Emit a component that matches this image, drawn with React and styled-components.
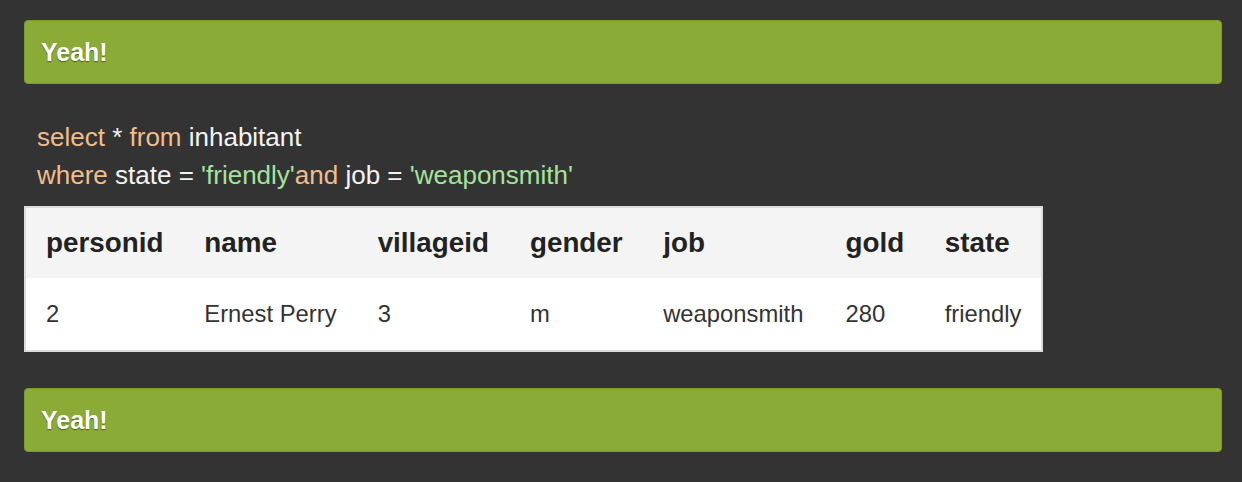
import React from "react";
import styled, { createGlobalStyle } from "styled-components";

const Global = createGlobalStyle`
  html, body { margin: 0; padding: 0; background: #333333; }
  body { font-family: "Liberation Sans", Arial, Helvetica, sans-serif; }
`;

const Page = styled.div`
  padding: 20px 20px 20px 24px;
  display: flex;
  flex-direction: column;
  align-items: flex-start;
`;

const Banner = styled.div`
  box-sizing: border-box;
  width: 100%;
  height: 64px;
  display: flex;
  align-items: center;
  padding: 0 16px;
  margin-top: ${(p) => p.$top || 0}px;
  background: #8aab35;
  border: 1px solid #7a9a2c;
  border-radius: 4px;
  color: #ffffff;
  font-size: 25px;
  font-weight: 700;
  text-shadow: 0 1px 1px rgba(0, 0, 0, 0.45);
`;

const Code = styled.div`
  margin-top: 34px;
  padding-left: 13px;
  font-size: 26px;
  line-height: 38px;
  color: #f4f4f4;
  white-space: pre;
`;

const Kw = styled.span`
  color: #f0be8c;
`;

const Str = styled.span`
  color: #a5e39c;
`;

const Table = styled.table`
  margin-top: 12px;
  border: 2px solid #dcdcdc;
  border-collapse: collapse;
  table-layout: fixed;
  width: 1019px;
  background: #ffffff;
`;

const HeadRow = styled.tr`
  background: #f4f4f4;
  height: 71px;
`;

const BodyRow = styled.tr`
  background: #ffffff;
  height: 73px;
`;

const Th = styled.th`
  text-align: left;
  padding: 0 0 0 20px;
  font-size: 27.8px;
  font-weight: 700;
  color: #222222;
  vertical-align: middle;
`;

const Td = styled.td`
  padding: 0 0 0 20px;
  font-size: 23.8px;
  color: #333333;
  vertical-align: middle;
`;

const cols = [
  { key: "personid", w: 159 },
  { key: "name", w: 173 },
  { key: "villageid", w: 152 },
  { key: "gender", w: 133 },
  { key: "job", w: 182 },
  { key: "gold", w: 99 },
  { key: "state", w: 117 },
];

const row = ["2", "Ernest Perry", "3", "m", "weaponsmith", "280", "friendly"];

export default function App() {
  return (
    <>
      <Global />
      <Page>
        <Banner>Yeah!</Banner>
        <Code>
          <Kw>select</Kw> * <Kw>from</Kw> inhabitant
          {"\n"}
          <Kw>where</Kw> state = <Str>'friendly'</Str>
          <Kw>and</Kw> job = <Str>'weaponsmith'</Str>
        </Code>
        <Table>
          <colgroup>
            {cols.map((c) => (
              <col key={c.key} style={{ width: c.w }} />
            ))}
          </colgroup>
          <thead>
            <HeadRow>
              {cols.map((c) => (
                <Th key={c.key}>{c.key}</Th>
              ))}
            </HeadRow>
          </thead>
          <tbody>
            <BodyRow>
              {row.map((v, i) => (
                <Td key={i}>{v}</Td>
              ))}
            </BodyRow>
          </tbody>
        </Table>
        <Banner $top={36}>Yeah!</Banner>
      </Page>
    </>
  );
}
